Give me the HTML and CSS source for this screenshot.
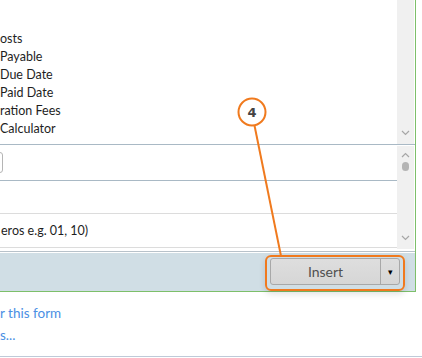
FILE: index.html
```html
<!DOCTYPE html>
<html lang="en">
  <head>
    <meta charset="UTF-8">
    <meta name="viewport" content="width=device-width,initial-scale=1.0">
    <title>Insert Field</title>
    <link rel="stylesheet" href="styles.css">
  </head>
  <body>
    <div class="panel">
      <div class="pane pane-list">
        <ul class="items">
          <li>osts</li>
          <li>Payable</li>
          <li>Due Date</li>
          <li>Paid Date</li>
          <li>ration Fees</li>
          <li>Calculator</li>
        </ul>
        <div class="scroll">
          <svg class="chev chev-down" width="9" height="6" viewBox="0 0 9 6"><polyline points="1,1 4.5,4.5 8,1"/></svg>
        </div>
      </div>
      <div class="pane pane-fields">
        <div class="fields">
          <div class="row row-input"><span class="input"></span></div>
          <div class="row row-empty"></div>
          <div class="row row-hint">eros e.g. 01, 10)</div>
        </div>
        <div class="scroll">
          <svg class="chev" width="9" height="6" viewBox="0 0 9 6"><polyline points="1,5 4.5,1.5 8,5"/></svg>
          <span class="thumb"></span>
          <svg class="chev chev-down" width="9" height="6" viewBox="0 0 9 6"><polyline points="1,1 4.5,4.5 8,1"/></svg>
        </div>
      </div>
      <div class="bar">
        <div class="split-btn">
          <button class="main">Insert</button>
          <button class="arrow">&#9662;</button>
        </div>
      </div>
    </div>
    <div class="links">
      <a href="#">r this form</a>
      <a href="#">s...</a>
    </div>

    <div class="highlight"></div>
    <svg class="callout" width="422" height="358" viewBox="0 0 422 358">
      <line x1="254.5" y1="125.5" x2="281" y2="256"/>
      <circle cx="252" cy="112" r="13.5"/>
      <text x="252" y="117">4</text>
    </svg>
  </body>
</html>
```
FILE: styles.css
```css
:root{--rule:#a9b9c5;--soft:#dcdcdc;--scroll:#f0f0f0;--green:#7dbf6a;--accent:#f07a1e}
*{box-sizing:border-box}
body{margin:0;width:422px;height:358px;overflow:hidden;background:#fff;color:#1e1e1e;font-family:Lato,"Noto Sans",sans-serif;font-size:12.5px;position:relative}
.panel{width:416px;border-right:1px solid var(--green);border-bottom:1px solid var(--green)}
.pane{display:flex}
.pane-list{height:145px;border-bottom:1px solid var(--rule)}
.pane-fields{height:106px}
.items{flex:1;list-style:none;margin:0;padding:30px 0 0;overflow:hidden}
.items li{line-height:18px;white-space:nowrap}
.scroll{width:17px;margin-right:1px;background:var(--scroll);display:flex;flex-direction:column;align-items:center}
.pane-list .scroll{height:144px}
.pane-fields .scroll{height:103px;margin-top:1px;padding-top:6px}
.chev{fill:none;stroke:#a6a6a6;stroke-width:1.2}
.chev-down{margin-top:auto;margin-bottom:8px}
.thumb{width:7px;height:9px;border-radius:4px;background:#b4b4b4;margin-top:4px}
.fields{flex:1;overflow:hidden}
.row{white-space:nowrap}
.row-input{height:36px;border-bottom:1px solid var(--rule);padding-top:7px}
.row-empty{height:33px;border-bottom:1px solid var(--soft)}
.row-hint{height:34px;border-bottom:1px solid var(--soft);line-height:33px;padding-left:1px}
.input{display:block;width:20px;height:21px;margin-left:-17px;border:1px solid #b5b5b5;border-radius:3px;background:#fff}
.bar{height:40px;border-top:1px solid #b8c2ca;background:#d0dee5;box-shadow:inset 0 1px #fff;display:flex;justify-content:flex-end;padding:6px 15px 6px 0}
.split-btn{display:flex;height:27px;border:1px solid #a8a8a8;border-radius:3px;background:linear-gradient(#dedede,#d6d6d6);overflow:hidden}
.split-btn button{border:none;background:none;padding:0;font-family:Lato,"Noto Sans",sans-serif;color:#505050;cursor:pointer}
.main{width:110px;font-size:14px;border-right:1px solid #a8a8a8 !important}
.arrow{width:18px;font-size:9px;color:#000 !important}
.links{height:65px;padding:10px 0 0;border-bottom:1px solid #bfcad8;font-size:13.5px}
.links a{display:block;line-height:22px;color:#4a8fe4;text-decoration:none;white-space:nowrap}
.highlight{position:absolute;left:265px;top:255px;width:140px;height:36px;border:2px solid var(--accent);border-radius:6px;box-shadow:0 3px 6px rgba(0,0,0,.12)}
.callout{position:absolute;left:0;top:0;pointer-events:none}
.callout line{stroke:var(--accent);stroke-width:2}
.callout circle{fill:#fff;stroke:var(--accent);stroke-width:2}
.callout text{font-family:"DejaVu Sans",sans-serif;font-weight:bold;font-size:13px;fill:#444;text-anchor:middle}
```
